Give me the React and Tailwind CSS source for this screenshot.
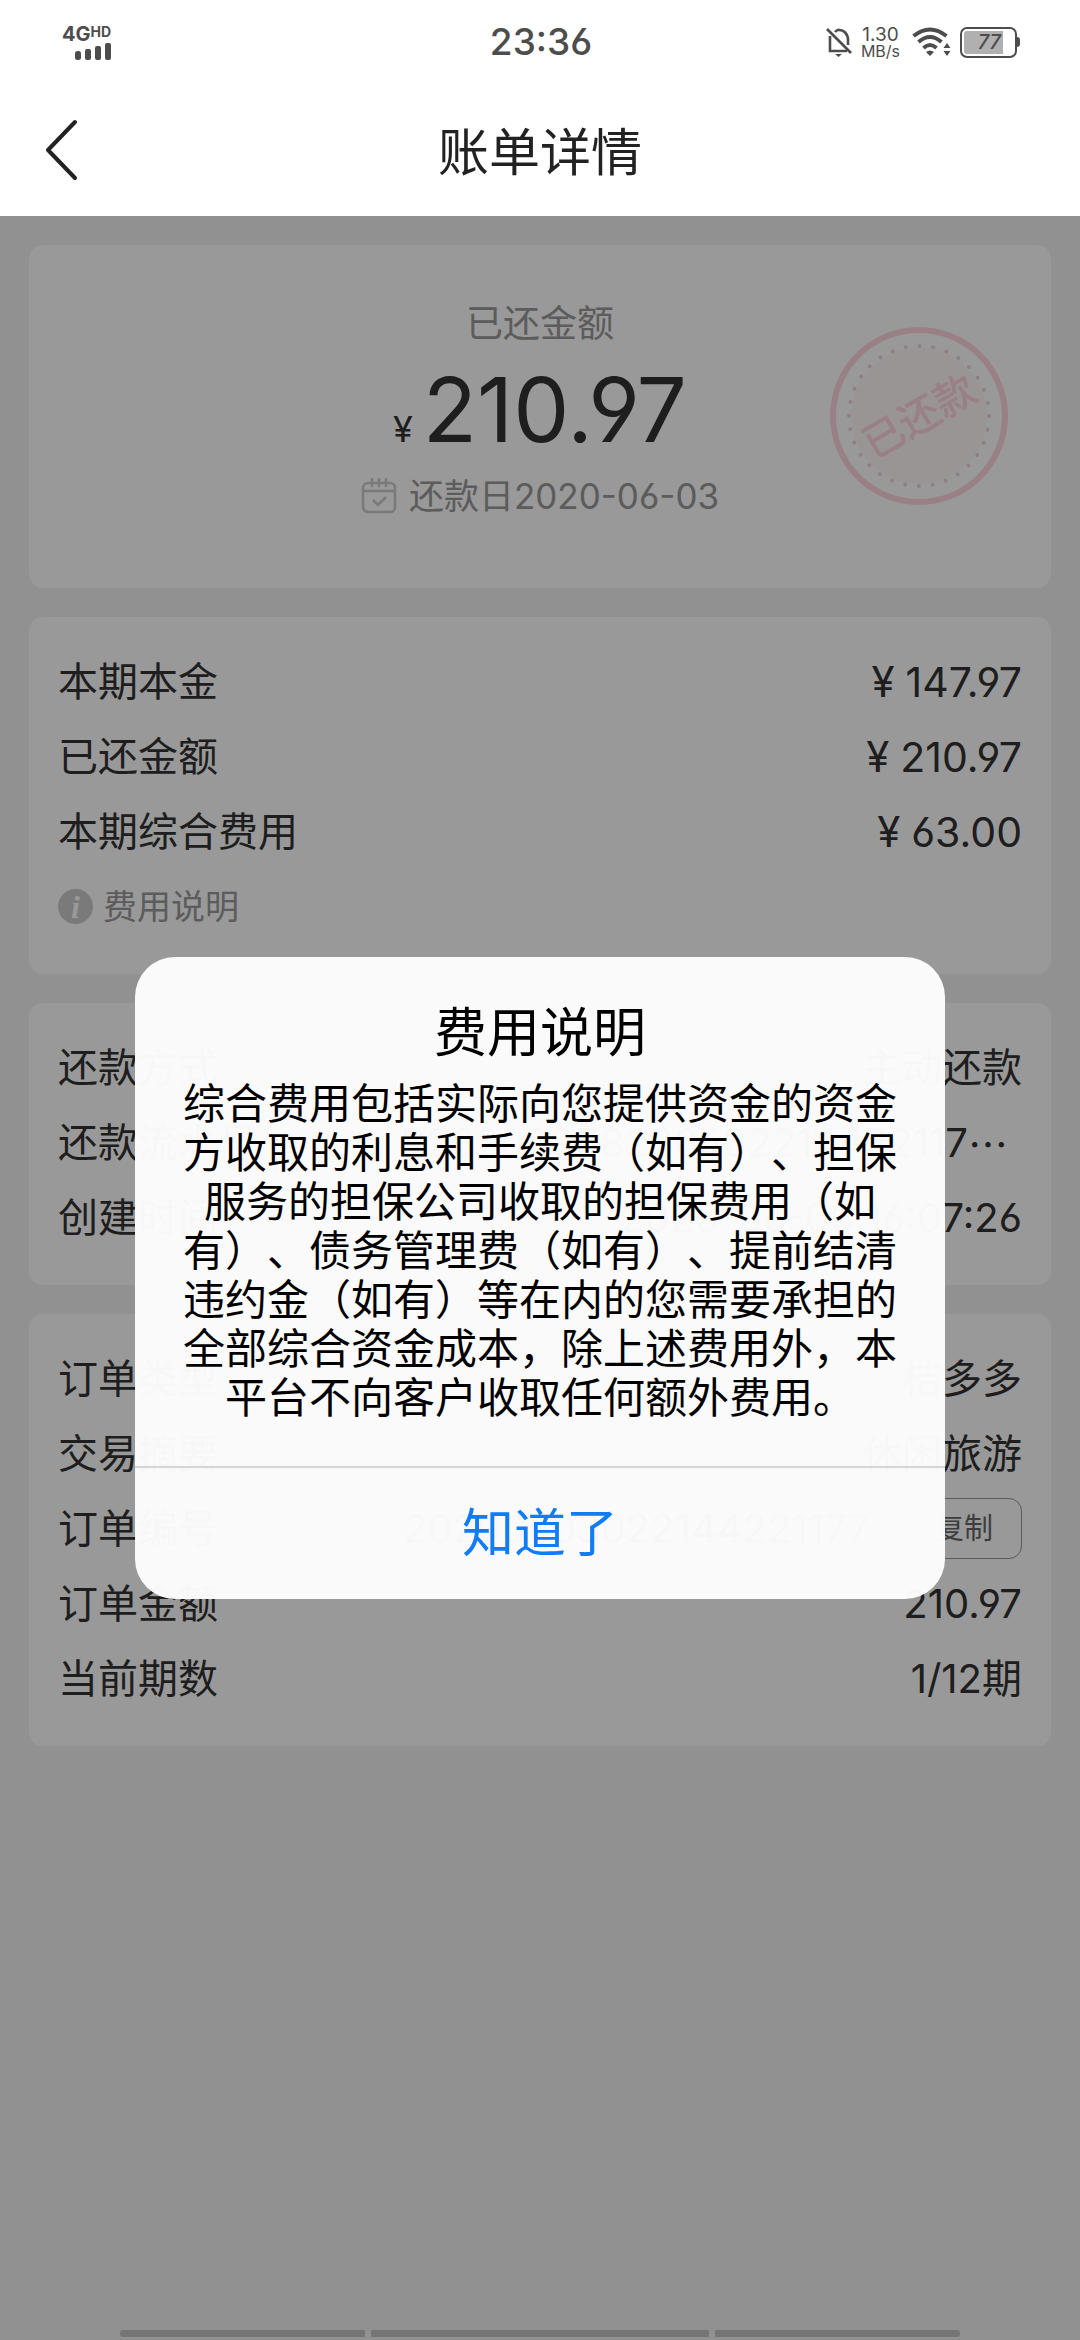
import React from "react";

const NUM = "[font-feature-settings:'cv03','cv04']";

function StatusBar() {
  return (
    <div className="flex h-[84px] items-center justify-between pr-[60px] pl-[62px] text-[#4d4d4d]">
      <div className="flex flex-1 items-center">
        <div className="flex flex-col items-end">
          <div className="flex items-start">
            <span className="text-[20px] leading-[18px] font-bold">4G</span>
            <span className="text-[14px] leading-[14px] font-bold">HD</span>
          </div>
          <svg width="36" height="17" viewBox="0 0 36 17" fill="currentColor" aria-hidden="true">
            <rect x="0" y="8" width="6" height="9" rx="2.5" />
            <rect x="10" y="6" width="6" height="11" rx="2" />
            <rect x="20" y="3" width="6" height="14" rx="2" />
            <rect x="30" y="0" width="6" height="17" rx="2" />
          </svg>
        </div>
      </div>
      <span className="text-[37px] leading-[40px] font-medium">23:36</span>
      <div className="flex flex-1 items-center justify-end">
        <svg width="28" height="32" viewBox="0 0 28 32" fill="none" stroke="currentColor" strokeWidth="2.6" aria-hidden="true">
          <path d="M2 3 L26 27" />
          <path d="M5 10 V25 H22" />
          <path d="M10 6 C11 4.500 13 4 14 4 C19 4 23 8 23 14 V19" />
          <path d="M10 28 H17 L13.500 31 Z" fill="currentColor" stroke="none" />
          <path d="M11 4 Q13.500 1 16 4 Z" fill="currentColor" stroke="none" />
        </svg>
        <span className="mx-2 flex flex-col items-center">
          <span className="text-[19px] leading-[17px]">1.30</span>
          <span className="text-[16px] leading-[16px]">MB/s</span>
        </span>
        <svg className="ml-1" width="40" height="30" viewBox="0 0 40 30" fill="none" stroke="currentColor" strokeWidth="4" aria-hidden="true">
          <path d="M1.500 9 Q18 -4 34.500 9" />
          <path d="M6.500 15 Q18 5 29.500 15" />
          <path d="M11.500 21 Q18 15 24.500 21" />
          <path d="M14 25 Q18 22 22 25 L18 29 Z" fill="currentColor" stroke="none" />
          <path d="M31.500 21 L35 16 L38.500 21 Z M31.500 24 L35 29 L38.500 24 Z" fill="currentColor" stroke="none" />
        </svg>
        <span className="ml-2 flex items-center">
          <span className="flex h-[31px] w-[57px] rounded-[7px] border-2 border-current p-[2px]">
            <span className="flex h-full w-[39px] items-center justify-end rounded-l-[3px] bg-[#b0b0b0] pr-[2px] text-[20px] leading-[20px] font-medium italic">
              77
            </span>
          </span>
          <span className="h-[10px] w-[3px] rounded-r-full bg-[#4d4d4d]" />
        </span>
      </div>
    </div>
  );
}

function CalendarIcon() {
  return (
    <svg width="36" height="36" viewBox="0 0 36 36" fill="none" stroke="#cccccc" strokeWidth="2.600" aria-hidden="true">
      <rect x="2" y="5" width="32" height="29" rx="5" />
      <path d="M2 13 H34" />
      <path d="M11 1 V8 M18 1 V8 M25 1 V8" strokeLinecap="round" />
      <path d="M12 22 L17 27 L25 19" />
    </svg>
  );
}

function Stamp() {
  return (
    <div className="absolute top-[81px] right-[42px] grid size-[180px] place-items-center">
      <svg className="absolute inset-0" viewBox="0 0 180 180" fill="none" aria-hidden="true">
        <circle cx="90" cy="90" r="68" fill="#fff8f9" />
        <circle cx="90" cy="90" r="86" stroke="#ffd5df" strokeWidth="6" />
        <circle cx="90" cy="90" r="70" stroke="#ead6dd" strokeWidth="4" strokeLinecap="round" strokeDasharray="0 13.744" />
      </svg>
      <span className="relative -rotate-30 text-[41px] leading-none font-medium text-[#ffd5df]">已还款</span>
    </div>
  );
}

function Card({ children }) {
  return <section className="rounded-[14px] bg-white px-[29px] pt-[27px] pb-[30px]">{children}</section>;
}

function Row({ label, children }) {
  return (
    <div className="flex h-[75px] items-center justify-between">
      <dt>{label}</dt>
      <dd className="flex items-center whitespace-pre">{children}</dd>
    </div>
  );
}

function Price({ value }) {
  return (
    <span className="flex items-baseline gap-[11px]">
      <span className="text-[42px]">¥</span>
      <span className="text-[41px]">{value}</span>
    </span>
  );
}

function FeeDialog() {
  return (
    <div className="absolute inset-0 flex items-center justify-center bg-black/40">
      <div
        role="dialog"
        aria-modal="true"
        aria-labelledby="fee-title"
        className="w-3/4 overflow-hidden rounded-[40px] bg-[#fcfcfc]/98 text-center text-black"
      >
        <div className="px-[45px] pt-[44px] pb-[44px]">
          <h2 id="fee-title" className="text-[53px] leading-[64px]">费用说明</h2>
          <p className="mt-[14px] text-[42px] leading-[49px] [text-spacing-trim:space-all]">
            综合费用包括实际向您提供资金的资金方收取的利息和手续费（如有）、担保服务的担保公司收取的担保费用（如有）、债务管理费（如有）、提前结清违约金（如有）等在内的您需要承担的全部综合资金成本，除上述费用外，本平台不向客户收取任何额外费用。
          </p>
        </div>
        <button type="button" className="block h-[133px] w-full border-t-2 border-[#d5d5d5] text-[52px] text-[#107cf5]">
          知道了
        </button>
      </div>
    </div>
  );
}

export default function App() {
  return (
    <div
      lang="zh-CN"
      className={`flex min-h-screen flex-col bg-white font-['Inter','Noto_Sans_CJK_SC',sans-serif] text-[#333333] ${NUM}`}
    >
      <header>
        <StatusBar />
        <div className="grid h-[132px] grid-cols-[1fr_auto_1fr] items-center text-[#222222]">
          <button type="button" aria-label="返回" className="ml-[44px] justify-self-start">
            <svg width="36" height="64" viewBox="0 0 36 64" fill="none" stroke="currentColor" strokeWidth="4" strokeLinecap="round" strokeLinejoin="round" aria-hidden="true">
              <path d="M31 4 L4 32 L31 60" />
            </svg>
          </button>
          <h1 className="pt-[6px] text-[51px] leading-[60px]">账单详情</h1>
        </div>
      </header>

      <main className="relative flex flex-1 flex-col bg-[#f2f2f2]">
        <div className="flex flex-col gap-[29px] p-[29px] text-[40px] leading-[48px]">
          <section className="relative flex h-[343px] flex-col items-center rounded-[14px] bg-white pt-[55px]">
            <p className="text-[37px] text-[#999999]">已还金额</p>
            <p className="flex items-baseline gap-[10px]">
              <span className="text-[36px]">¥</span>
              <span className="text-[89px] leading-[124px]">210.97</span>
            </p>
            <p className="flex items-center gap-[12px] text-[35px] text-[#999999]">
              <CalendarIcon />
              还款日2020-06-03
            </p>
            <Stamp />
          </section>

          <Card>
            <dl>
              <Row label="本期本金"><Price value="147.97" /></Row>
              <Row label="已还金额"><Price value="210.97" /></Row>
              <Row label="本期综合费用"><Price value="63.00" /></Row>
            </dl>
            <button type="button" className="flex h-[75px] items-center gap-[10px] text-[34px] text-[#999999]">
              <span className="grid size-[35px] place-items-center rounded-full bg-[#cccccc] font-['Liberation_Serif',serif] text-[32px] leading-none font-bold text-white italic">
                i
              </span>
              费用说明
            </button>
          </Card>

          <Card>
            <dl>
              <Row label="还款方式">主动还款</Row>
              <Row label="还款流水号">
                R20200308220602214422117
                <span className="pr-[14px] font-['Noto_Sans_CJK_SC',sans-serif]">…</span>
              </Row>
              <Row label="创建时间">2020-06-03 16:07:26</Row>
            </dl>
          </Card>

          <Card>
            <dl>
              <Row label="订单类型">桔多多</Row>
              <Row label="交易摘要">休闲旅游</Row>
              <Row label="订单编号">
                20200603022144221177
                <button type="button" className="ml-[36px] h-[61px] rounded-[13px] border border-[#999999] px-[28px] text-[29px] text-[#666666]">
                  复制
                </button>
              </Row>
              <Row label="订单金额">210.97</Row>
              <Row label="当前期数">1/12期</Row>
            </dl>
          </Card>
        </div>

        <FeeDialog />

        <div className="absolute inset-x-[120px] bottom-[3px] grid h-[7px] grid-cols-[245fr_338fr_245fr] gap-[6px]">
          <span className="rounded-l-[3px] bg-[#757575]" />
          <span className="bg-[#757575]" />
          <span className="rounded-r-[3px] bg-[#757575]" />
        </div>
      </main>
    </div>
  );
}
